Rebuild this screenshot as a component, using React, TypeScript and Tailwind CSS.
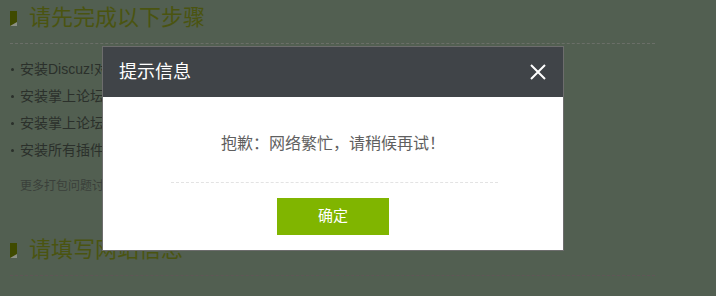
const FONT = "font-['Liberation_Sans','Noto_Sans_CJK_SC',sans-serif]";

function Marker() {
  return (
    <span className="relative block h-[15px] w-[7px] shrink-0 bg-[#3f4a00]">
      <span className="absolute bottom-0 right-0 h-0 w-0 border-b-[4px] border-l-[7px] border-b-[#8b8f86] border-l-transparent" />
    </span>
  );
}

function SectionTitle({ text }: { text: string }) {
  return (
    <div className="flex h-[22px] items-center gap-[12px]">
      <Marker />
      <h2 className="text-[22px] leading-[22px] font-normal text-[#4a5410]">{text}</h2>
    </div>
  );
}

const steps = [
  "安装Discuz!对应版本的掌上论坛插件",
  "安装掌上论坛插件后请开启插件",
  "安装掌上论坛插件后请更新缓存",
  "安装所有插件后请清空缓存",
];

export default function App() {
  return (
    <div className={`relative h-[296px] w-[716px] overflow-hidden bg-[#525f51] ${FONT}`}>
      <div className="w-[655px] pl-[10px] pt-[7px]">
        <div className="border-b border-dashed border-[#6b6f68] pb-[14px]">
          <SectionTitle text="请先完成以下步骤" />
        </div>
        <ul className="mt-[12px]">
          {steps.map((s) => (
            <li key={s} className="flex h-[27px] items-center text-[14px] text-[#2b302b]">
              <span className="mr-[6px] ml-[1px] h-[3px] w-[3px] rounded-full bg-[#2b302b]" />
              {s}
            </li>
          ))}
        </ul>
        <p className="mt-[12px] pl-[10px] text-[12px] leading-[20px] text-[#3a3f3a]">更多打包问题讨论请访问官方论坛</p>
        <div className="mt-[43px] border-b border-dashed border-[#5f5656] pb-[14px]">
          <SectionTitle text="请填写网站信息" />
        </div>
      </div>

      <div className="absolute left-[102px] top-[46px] flex h-[205px] w-[462px] flex-col border border-[#6d6d6d] bg-white">
        <div className="flex h-[50px] shrink-0 items-center justify-between bg-[#404448] pl-[16px] pr-[17px]">
          <span className="text-[18px] text-white">提示信息</span>
          <svg width="16" height="16" viewBox="0 0 16 16" className="block">
            <path d="M1 1L15 15M15 1L1 15" stroke="#ffffff" strokeWidth="2" fill="none" />
          </svg>
        </div>
        <div className="flex flex-1 flex-col pt-[37px]">
          <p className="text-center text-[16px] leading-[20px] text-[#5f5f5f]">抱歉：网络繁忙，请稍候再试！</p>
          <div className="ml-[68px] mt-[28px] w-[327px] border-t border-dashed border-[#e3e3e3]" />
          <button className="mx-auto mt-[15px] h-[37px] w-[112px] bg-[#80b500] text-[15px] text-white">确定</button>
        </div>
      </div>
    </div>
  );
}
